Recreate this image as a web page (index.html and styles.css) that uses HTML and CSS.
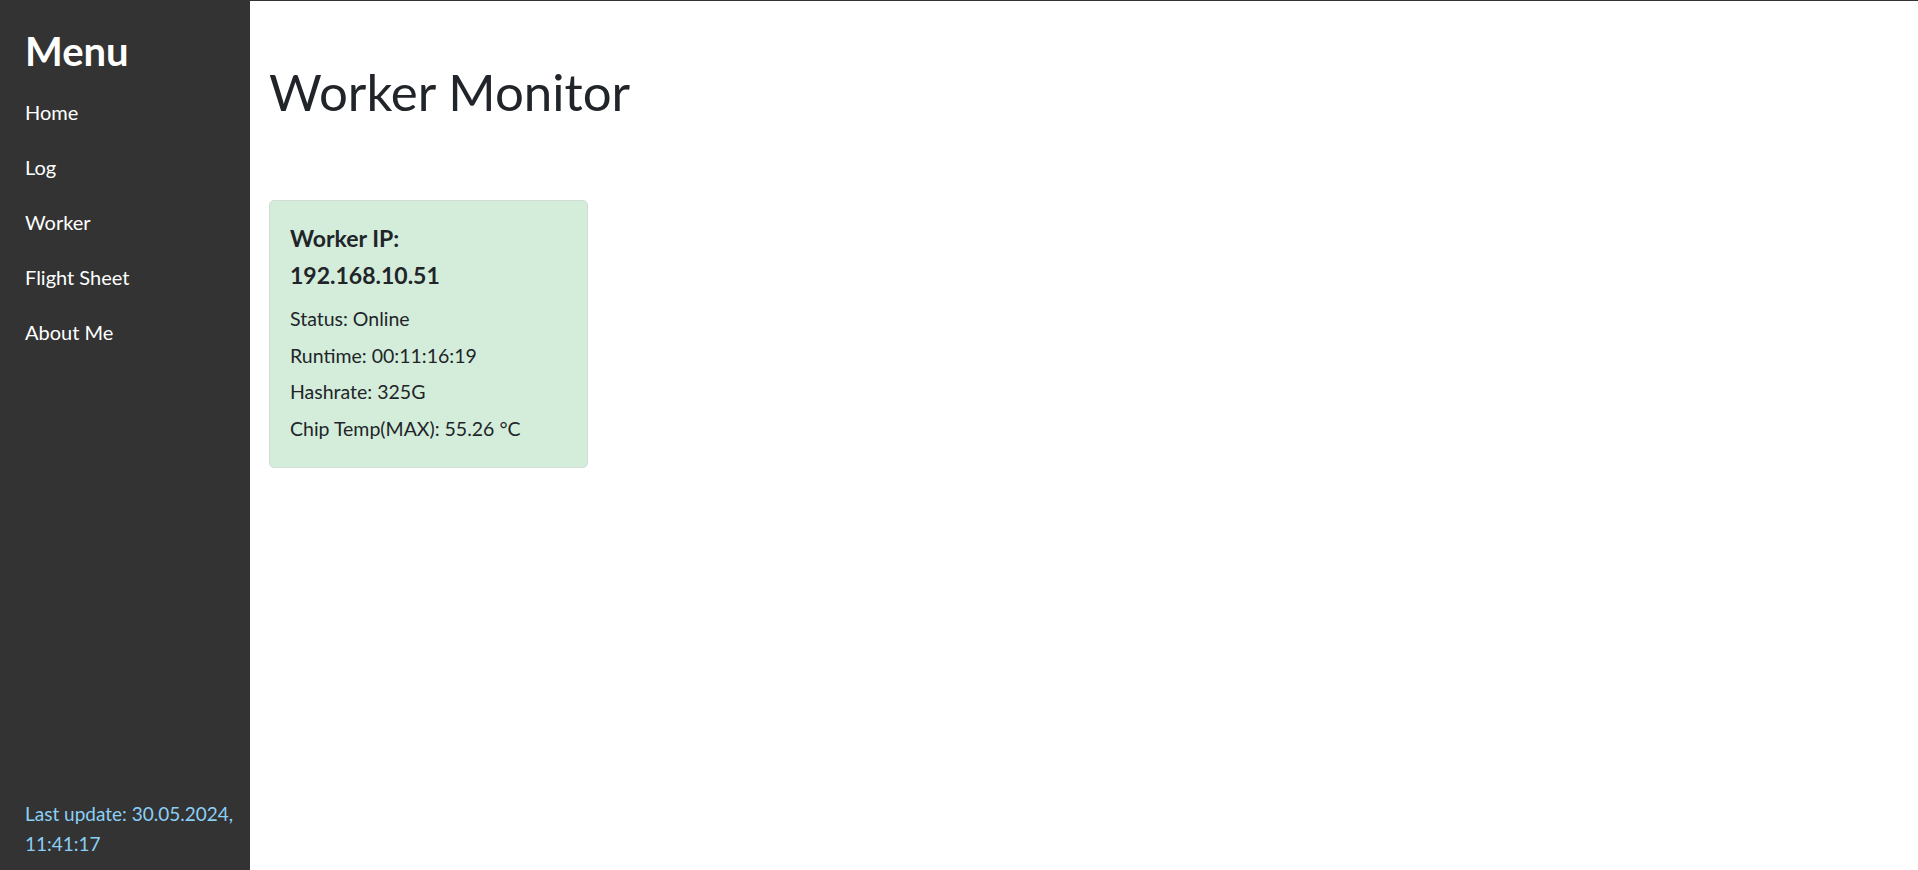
FILE: index.html
```html
<!DOCTYPE html>
<html lang="en">
<head>
<meta charset="utf-8">
<title>Worker Monitor</title>
<link rel="stylesheet" href="styles.css">
</head>
<body>
<div class="layout">
  <aside class="sidebar">
    <h1 class="menu-title">Menu</h1>
    <ul class="nav">
      <li><a href="#">Home</a></li>
      <li><a href="#">Log</a></li>
      <li><a href="#">Worker</a></li>
      <li><a href="#">Flight Sheet</a></li>
      <li><a href="#">About Me</a></li>
    </ul>
    <div class="last-update">Last update: 30.05.2024, 11:41:17</div>
  </aside>
  <main class="main">
    <h1 class="page-title">Worker Monitor</h1>
    <div class="cards">
      <div class="card">
        <h4 class="card-title">Worker IP:<br>192.168.10.51</h4>
        <p class="card-line">Status: Online</p>
        <p class="card-line">Runtime: 00:11:16:19</p>
        <p class="card-line">Hashrate: 325G</p>
        <p class="card-line">Chip Temp(MAX): 55.26 °C</p>
      </div>
    </div>
  </main>
</div>
</body>
</html>
```

FILE: styles.css
```css
* { box-sizing: border-box; }

html, body {
  margin: 0;
  padding: 0;
  height: 100%;
}

body {
  font-family: Lato, "Open Sans", sans-serif;
  color: #212529;
  background: #ffffff;
}

.layout {
  display: flex;
  height: 870px;
}

.sidebar {
  width: 250px;
  flex: 0 0 250px;
  background: #333333;
  color: #ffffff;
  display: flex;
  flex-direction: column;
  padding: 0 0 12px 25px;
}

.menu-title {
  margin: 26px 0 0;
  font-size: 40px;
  line-height: 50px;
  font-weight: 700;
  color: #ffffff;
}

.nav {
  list-style: none;
  margin: 9px 0 0;
  padding: 0;
}

.nav li {
  line-height: 55px;
  font-size: 20px;
}

.nav a {
  color: #ffffff;
  text-decoration: none;
}

.last-update {
  margin-top: auto;
  color: #8ccff5;
  font-size: 19px;
  line-height: 29.5px;
}

.main {
  flex: 1;
  border-top: 1px solid #333333;
  padding: 0 19px;
}

.page-title {
  margin: 59px 0 0;
  font-size: 51px;
  line-height: 64px;
  font-weight: 400;
  color: #212529;
}

.cards {
  display: flex;
  gap: 20px;
  margin-top: 76px;
}

.card {
  width: 319px;
  height: 268px;
  background: #d4edda;
  border: 1px solid #d2dcd5;
  border-radius: 5px;
  padding: 19px 20px;
}

.card-title {
  margin: 0 0 7px;
  font-size: 23px;
  line-height: 37px;
  font-weight: 700;
}

.card-line {
  margin: 0;
  font-size: 19.5px;
  line-height: 36.7px;
}
```
